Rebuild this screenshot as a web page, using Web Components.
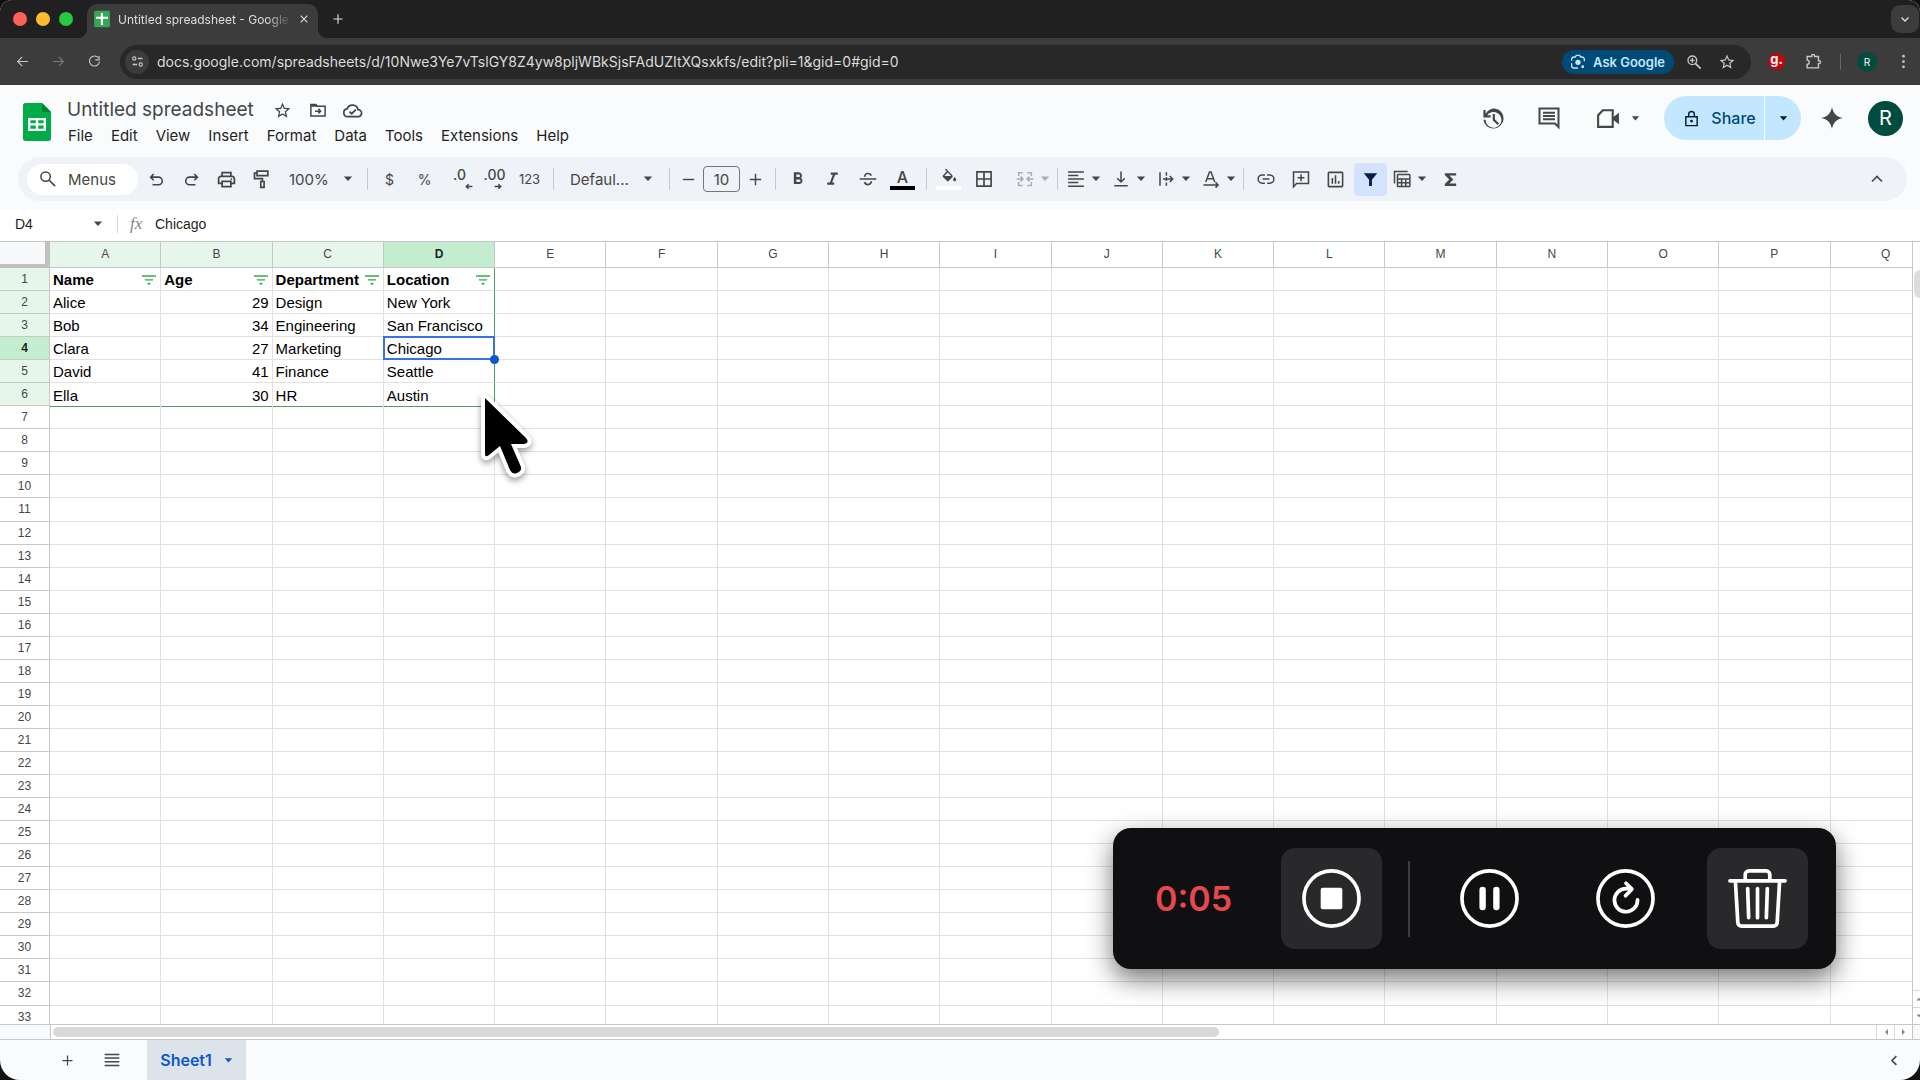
<!DOCTYPE html>
<html lang="en">
<head>
<meta charset="utf-8">
<title>Untitled spreadsheet - Google Sheets</title>
<style>
  html, body{height:100%;margin:0;background:#111}
  body{font-family:Inter, Roboto, "Liberation Sans", sans-serif;color:#444746;overflow:hidden}
</style>
</head>
<body>
<browser-window>
  <tab-strip slot="chrome"></tab-strip>
  <address-bar slot="chrome"></address-bar>
  <sheet-header></sheet-header>
  <tool-bar></tool-bar>
  <formula-bar cell="D4" value="Chicago"></formula-bar>
  <sheet-grid></sheet-grid>
  <sheet-footer></sheet-footer>
</browser-window>
<recorder-bar>0:05</recorder-bar>
<mouse-pointer></mouse-pointer>

<script>
  (function() {
    // inner markup of each icon, on a 24x24 box
    const ICONS = {
      sheetTab: '<rect x="1.500" y="1" width="21" height="22" rx="2" fill="#34a853"/><path d="M10.500 4h2.800v5H20v2.600h-6.700V20h-2.800v-8.400H4V9h6.500z" fill="#fff"/>',
      close: '<path d="M4 4l16 16M20 4L4 20" class="s w3"/>',
      plus: '<path d="M12 4v16M4 12h16" class="s w2"/>',
      minus: '<path d="M4 12h16" class="s w2"/>',
      chevronDown: '<path d="M5 9l7 7 7-7" class="s w3"/>',
      chevronUp: '<path d="M6 15l6-6 6 6" class="s w2"/>',
      chevronLeft: '<path d="M15 5l-7 7 7 7" class="s w3"/>',
      back: '<path d="M22 12H3M11.500 3.500L3 12l8.500 8.500" class="s w2"/>',
      forward: '<path d="M2 12h19M12.500 3.500L21 12l-8.500 8.500" class="s w2"/>',
      reload: '<path d="M19.500 5.500A9.300 9.300 0 1 0 21.300 12" class="s w2"/><path d="M21.500 2v8h-8V8h6V2z"/>',
      tune: '<circle cx="6" cy="6.500" r="3" class="s w2"/><circle cx="18" cy="17.500" r="3" class="s w2"/><path d="M12.500 6.500H21M3 17.500h8.500" class="s w3"/>',
      lens: '<path d="M2.500 10V8A3.500 3.500 0 0 1 6 4.500h2L9.500 2h5L16 4.500h2A3.500 3.500 0 0 1 21.500 8v3M2.500 14v3.500A3.500 3.500 0 0 0 6 21h6" class="s w2"/><circle cx="12" cy="12.500" r="4"/><circle cx="19" cy="19" r="2.200"/>',
      zoomIn: '<circle cx="9.500" cy="9.500" r="6.500" class="s w2"/><path d="M14 14l8 8" class="s w3"/><path d="M9.500 6v7M6 9.500h7" class="s w2"/>',
      star: '<path d="M22 9.240l-7.190-.620L12 2 9.190 8.630 2 9.240l5.460 4.730L5.820 21 12 17.270 18.180 21l-1.630-7.030zM12 15.400l-3.760 2.270 1-4.280-3.320-2.880 4.380-.380L12 6.100l1.710 4.040 4.380.380-3.320 2.880 1 4.280z"/>',
      puzzle: '<path d="M3 5h6.500V4a2 2 0 0 1 4 0v1H19v6h1a2 2 0 0 1 0 4h-1v6H3v-5a3 3 0 0 0 0-6z" class="s w2"/>',
      dots: '<circle cx="12" cy="3.500" r="2.200"/><circle cx="12" cy="12" r="2.200"/><circle cx="12" cy="20.500" r="2.200"/>',
      folder: '<path d="M2.500 4.500H9l2 2.500h10.500v13h-19z" class="s w2"/><path d="M8 13.500h7M12.500 10.500l3 3-3 3" class="s w2"/><path d="M2 4h7.500l2.500 3.500H2z"/>',
      cloud: '<path d="M6.500 19a4.500 4.500 0 0 1-.6-8.950 6.500 6.500 0 0 1 12.400.950A4 4 0 0 1 18.500 19z" class="s w2"/><path d="M8.500 13.200l2.600 2.500 4.700-4.700" class="s w2"/>',
      history: '<path d="M13 3a9 9 0 0 0-8 4.900V4.500H3V11h6.500V9H6.400A7 7 0 1 1 5 13H3a9 9 0 1 0 10-10z"/><path d="M13.200 8h-1.900v5.500l4.300 4.200 1.400-1.300-3.800-3.700z"/>',
      comment: '<path d="M2.500 2.500h19V21l-3.500-3.500H2.500z" class="s w2"/><path d="M6 6.800h12M6 10h12M6 13.200h12" class="s w2"/>',
      video: '<path d="M7.500 4H17v16H3V8.800z" class="s w2"/><path d="M17 11l6-4.500v11L17 13z"/>',
      lock: '<path d="M4 9.500h16V22H4z" class="s w2"/><path d="M8 9V6a4 4 0 0 1 8 0v3" class="s w2"/><circle cx="12" cy="15.700" r="2"/>',
      spark: '<path d="M12 0c1.300 7 5 10.700 12 12-7 1.300-10.700 5-12 12-1.300-7-5-10.700-12-12 7-1.300 10.700-5 12-12z"/>',
      search: '<circle cx="8.800" cy="8.800" r="6.300" class="s w2"/><path d="M13.500 13.500l8 8" class="s w2"/>',
      undo: '<path d="M8.500 5L4.500 9l4 4M5 9h9.500a4.800 4.800 0 0 1 0 9.600H7" class="s w2"/>',
      redo: '<path d="M15.500 5l4 4-4 4M19 9H9.500a4.800 4.800 0 0 0 0 9.600H17" class="s w2"/>',
      print: '<path d="M7 8V4h10v4M6 16.500H3V11a2.500 2.500 0 0 1 2.500-2.500h13A2.500 2.500 0 0 1 21 11v5.500h-3M7 14h10v6H7z" class="s w2"/><circle cx="17.500" cy="11.500" r="1"/>',
      paint: '<path d="M6 2.500h13v5.500H6zM6 5H3v6.500h9.500V15M10.500 15h4v7h-4z" class="s w2"/>',
      arrow: '<path d="M2 6l10 11L22 6z"/>',
      arrowLeft: '<path d="M23 18H13M16.500 14l-4 4 4 4" class="s w3"/>',
      bold: '<path d="M15.600 10.800A4 4 0 0 0 13.250 4H7v14h7a3.900 3.900 0 0 0 1.600-7.200zM10 6.500h3a1.500 1.500 0 0 1 0 3h-3zm3.500 9H10v-3h3.500a1.500 1.500 0 0 1 0 3z"/>',
      italic: '<path d="M10 4v2.600h2.400L9 15.400H6V18h8v-2.600h-2.400L15 6.600h3V4z"/>',
      strike: '<path d="M1 11h22v2H1zM6.500 9c0-3.500 2.500-5.500 5.500-5.500 2.600 0 4.600 1.200 5.400 3.500l-2.200.900c-.500-1.400-1.600-2.100-3.200-2.100-1.800 0-3.200 1-3.200 3.200zM17.500 15c0 3.500-2.500 5.500-5.500 5.500-2.800 0-4.900-1.400-5.700-3.900l2.200-.900c.500 1.700 1.700 2.500 3.500 2.500 1.900 0 3.200-1.200 3.200-3.200z"/>',
      bucket: '<path d="M16.500 9.500L8 1 6.600 2.400l2.400 2.400-5 5a1.500 1.500 0 0 0 0 2.100l5.400 5.400a1.500 1.500 0 0 0 2.100 0l5-5a1.500 1.500 0 0 0 0-2.100zM5.800 10.500l4.600-4.500 4.600 4.500zM19.500 12s-2 2.200-2 3.600a2 2 0 0 0 4 0c0-1.400-2-3.600-2-3.600z"/>',
      borders: '<path d="M3.500 3.500h17v17h-17zM12 3.500v17M3.500 12h17" class="s w2"/>',
      merge: '<path d="M9 3.500H3.500V8M3.500 16v4.500H9M15 3.500h5.500V8M20.500 16v4.500H15M1 12h7.500M6 8.800L9.200 12 6 15.200M23 12h-7.500M18 8.800L14.800 12l3.200 3.200" class="s w2"/>',
      align: '<path d="M1.500 1.500h21v2h-21zM1.500 6.200h13.500v2H1.500zM1.500 11h21v2h-21zM1.500 15.800h13.500v2H1.500zM1.500 20.500h21v2h-21z"/>',
      bottom: '<path d="M3 21h18M12 2v14M7 11l5 5 5-5" class="s w2"/>',
      overflow: '<path d="M4 3v18M12.500 3v4.500M12.500 16.500V21M8 12h13M17 8l4 4-4 4M12.500 9.500v5" class="s w2"/>',
      rotate: '<path d="M2 20h19M18 16.500l3.500 3.500-3.500 3.500" class="s w2"/><path d="M5 16l5-13.500h2L17 16M7 11.500h8" class="s w2"/>',
      link: '<path d="M10.500 6.500H7a5.500 5.500 0 0 0 0 11h3.500M13.500 6.500H17a5.500 5.500 0 0 1 0 11h-3.500M7.500 12h9" class="s w2"/>',
      addComment: '<path d="M2 22.500V2.500h20V18H6z" class="s w2"/><path d="M12 5.500v9.500M7.500 10.200h9" class="s w2"/>',
      chart: '<rect x="3" y="3" width="18" height="18" rx="1" class="s w2"/><path d="M8 10v7.500M12 6.500v11M16 14v3.500" class="s w2"/>',
      filter: '<path d="M2.500 3h19L14 12.500V21h-4v-8.500z"/>',
      table: '<path d="M2 18V2h17.500" class="s w2"/><rect x="6" y="6" width="16.500" height="16" rx="1" class="s w2"/><path d="M6 12h16.500M6 17h16.500M11.500 12v10M17 12v10" class="s w2"/>',
      sigma: '<path d="M4 3h16v3.500h-9.500l5.500 5.500-5.500 5.500H20V21H4v-2.800L10.300 12 4 5.800z"/>',
      filterLines: '<path d="M0 4h24v2.400H0zM5 10.500h14v2.400H5zM8.500 17h7L12 21z"/>',
      menu: '<path d="M1 2.500h22v2.200H1zM1 8h22v2.200H1zM1 13.500h22v2.200H1zM1 19h22v2.200H1z"/>',
      tick: '<path d="M8 6l6 6-6 6z"/>',
      stop: '<circle cx="12" cy="12" r="11.200" class="s w1"/><rect x="7.600" y="7.600" width="8.800" height="8.800" rx=".8"/>',
      pause: '<circle cx="12" cy="12" r="11.200" class="s w1"/><path d="M9.200 8.500v7M14.800 8.500v7" class="s w3 r"/>',
      restart: '<circle cx="12" cy="12" r="11.200" class="s w1"/><path d="M14.300 8h-2.100a4.700 4.700 0 1 0 4.700 4.500M12.200 5.800L14.600 8.200 12 10.900" class="s w1 r"/>',
      trash: '<path d="M.8 4.800h22.400M7 4.800V2.300A1.500 1.500 0 0 1 8.500.800h7A1.500 1.500 0 0 1 17 2.300v2.500M3 4.800l1 17a1.500 1.500 0 0 0 1.500 1.400h13a1.500 1.500 0 0 0 1.500-1.400l1-17M8 8l.4 11.800M12 8v11.800M16 8l-.4 11.800" class="s w1 r"/>'
    };

    const BASE = `
      :host, *{box-sizing:border-box}
      button{display:inline-flex;align-items:center;justify-content:center;padding:0;border:0;background:none;color:inherit;font:inherit;cursor:pointer}
      select, input{font:inherit;color:inherit;background:none;border:0;margin:0;padding:0;appearance:none;outline:0}
    `;

    // registers an element whose shadow root holds the given styles and markup
    function define(name, css, markup) {
      customElements.define(name, class extends HTMLElement {
        constructor() {
          super();
          const template = document.createElement('template');
          template.innerHTML = `<style>${BASE}${css}</style>${typeof markup == 'function' ? markup(this) : markup}`;
          this.attachShadow({mode: 'open'}).append(template.content.cloneNode(true));
        }
      });
    }

    const icon = (name, size = 20) => `<ui-icon name="${name}" style="--size:${size}px"></ui-icon>`;
    const btn = (label, name, size, cls = '') => `<button class="${cls}" aria-label="${label}">${icon(name, size)}</button>`;
    const drop = (label, name, cls = '') => `<button class="drop ${cls}" aria-label="${label}">${icon(name, 18)}${icon('arrow', 10)}</button>`;

    define('ui-icon', `
      :host{display:inline-flex;flex:none;width:var(--size);height:var(--size)}
      svg{width:100%;height:100%;fill:currentColor;overflow:visible}
      .s{fill:none;stroke:currentColor}
      .w1{stroke-width:1.5}
      .w2{stroke-width:2}
      .w3{stroke-width:2.6}
      .r{stroke-linecap:round;stroke-linejoin:round}
    `, el => `<svg viewBox="0 0 24 24" aria-hidden="true">${ICONS[el.getAttribute('name')]}</svg>`);

    define('browser-window', `
      :host{display:flex;flex-direction:column;height:100%;overflow:hidden;border-radius:12px 12px 20px 20px;background:#f9fbfd}
      ::slotted(sheet-grid){flex:1;min-height:0}
    `, `<slot name="chrome"></slot><slot></slot>`);

    define('tab-strip', `
      :host{display:flex;align-items:center;height:38px;background:#202020;color:#dedede;font-size:12px}
      .lights{display:flex;gap:9px;padding:0 14px 0 13px}
      .lights button{width:14px;height:14px;border-radius:50%}
      .tab{align-self:flex-end;position:relative;display:flex;align-items:center;gap:7px;width:231px;height:34px;padding:0 9px 4px 6px;background:#3c3c3c;border-radius:10px 10px 0 0}
      .tab::before, .tab::after{content:"";position:absolute;bottom:0;width:9px;height:9px;background:radial-gradient(circle at 0 0, transparent 9px, #3c3c3c 9px)}
      .tab::before{right:100%}
      .tab::after{left:100%;background:radial-gradient(circle at 100% 0, transparent 9px, #3c3c3c 9px)}
      .title{flex:1;overflow:hidden;white-space:nowrap;mask-image:linear-gradient(90deg, #000 85%, transparent)}
      .new{margin-left:13px}
      .list{width:28px;height:28px;margin:0 1px 0 auto;border-radius:9px;background:#3c3c3c}
    `, `
      <div class="lights">
        <button aria-label="Close window" style="background:#ff5f57"></button>
        <button aria-label="Minimize window" style="background:#febc2e"></button>
        <button aria-label="Zoom window" style="background:#28c840"></button>
      </div>
      <div class="tab">${icon('sheetTab', 18)}<span class="title">Untitled spreadsheet - Google Sheets</span>${btn('Close tab', 'close', 10)}</div>
      ${btn('New tab', 'plus', 14, 'new')}
      ${btn('Search tabs', 'chevronDown', 12, 'list')}
    `);

    define('address-bar', `
      :host{display:flex;align-items:center;height:47px;padding:0 9px 0 10px;background:#3c3c3c;color:#c7c7c7}
      .nav{display:flex;gap:12px}
      .nav button{width:24px;height:24px}
      .off{opacity:.45}
      .omni{display:flex;flex:1;align-items:center;height:34px;margin-left:14px;padding:0 8px 0 5px;border-radius:17px;background:#282828}
      .info{width:24px;height:24px;border-radius:50%;background:#3c3c3c}
      input{flex:1;min-width:0;margin-left:8px;font-size:14px;color:#dcdcdc}
      .ask{gap:7px;height:24px;margin-right:3px;padding:0 9px 0 8px;border-radius:12px;background:#004a77;color:#c2e7ff;font-size:13px;font-weight:600}
      .omni .tool{width:33px}
      .ext{display:flex;align-items:center;margin-left:17px}
      .g{width:17px;height:17px;border-radius:50%;background:#c5050c;color:#fff;font-size:13px;font-weight:700;line-height:13px;align-items:flex-start}
      .puzzle{width:20px;margin:0 17px 0 18px}
      .ext i{width:1px;height:16px;background:#666}
      .me{width:20px;height:20px;margin:0 19px 0 16px;border-radius:50%;background:#004d40;color:#fff;font-size:10px}
    `, `
      <div class="nav">${btn('Back', 'back', 13)}${btn('Forward', 'forward', 13, 'off')}${btn('Reload', 'reload', 13)}</div>
      <div class="omni">
        ${btn('Site information', 'tune', 13, 'info')}
        <input aria-label="Address" value="docs.google.com/spreadsheets/d/10Nwe3Ye7vTslGY8Z4yw8pljWBkSjsFAdUZItXQsxkfs/edit?pli=1&amp;gid=0#gid=0">
        <button class="ask">${icon('lens', 16)}Ask Google</button>
        ${btn('Zoom', 'zoomIn', 16, 'tool')}${btn('Bookmark', 'star', 18, 'tool')}
      </div>
      <div class="ext"><button class="g">g.</button>${btn('Extensions', 'puzzle', 17, 'puzzle')}<i></i><button class="me">R</button>${btn('More', 'dots', 15)}</div>
    `);

    define('sheet-header', `
      :host{display:flex;height:72px;padding:0 17px 0 23px;color:#444746}
      .logo{flex:none;width:28px;height:38px;margin-top:18px}
      .names{flex:1;padding:12px 0 0 8px}
      .top{display:flex;align-items:center;height:26px}
      h1{margin:0 17px 0 8px;font:400 19px/26px Inter, Roboto, sans-serif}
      .top button{width:24px;height:24px;margin-right:11px}
      nav{display:flex}
      nav button{height:24px;padding:0 9px;font-size:15px;color:#1f1f1f}
      .right{display:flex;align-items:center;height:44px;margin-top:11px}
      .right .ico{width:35px;height:35px;margin-right:20px}
      .right .meet{gap:11px;margin:0 24px 0 9px}
      .share{display:flex;gap:1px;height:44px;margin-right:17px;color:#001d35}
      .share button{height:44px;background:#c2e7ff}
      .share .main{gap:11px;width:100px;padding-left:11px;border-radius:22px 0 0 22px;font-size:16px;font-weight:500;color:#004a77}
      .share .main ui-icon{color:#001d35}
      .share .more{width:36px;border-radius:0 22px 22px 0}
      .gem{width:27px;margin-right:23px}
      .me{width:35px;height:35px;border-radius:50%;background:#004d40;color:#fff;font-size:20px}
    `, `
      <svg class="logo" viewBox="0 0 28 38" aria-hidden="true">
        <path d="M2.500 0H19l9 9v26.500a2.500 2.500 0 0 1-2.500 2.500h-23A2.500 2.500 0 0 1 0 35.500v-33A2.500 2.500 0 0 1 2.500 0z" fill="#00ac47"/>
        <path d="M19 0l9 9h-9z" fill="#00832d"/>
        <path d="M5 15h18v13H5zm2.400 2.300v3h5.400v-3zm7.800 0v3h5.400v-3zm-7.800 5.300v3.100h5.400v-3.100zm7.800 0v3.100h5.400v-3.100z" fill="#fff" fill-rule="evenodd"/>
      </svg>
      <div class="names">
        <div class="top"><h1>Untitled spreadsheet</h1>${btn('Star', 'star', 19)}${btn('Move', 'folder', 18)}${btn('Saved to Drive', 'cloud', 21)}</div>
        <nav>${['File', 'Edit', 'View', 'Insert', 'Format', 'Data', 'Tools', 'Extensions', 'Help'].map(t => `<button>${t}</button>`).join('')}</nav>
      </div>
      <div class="right">
        ${btn('Version history', 'history', 27, 'ico')}${btn('Comments', 'comment', 24, 'ico')}
        <button class="meet" aria-label="Join a call">${icon('video', 25)}${icon('arrow', 9)}</button>
        <div class="share"><button class="main">${icon('lock', 17)}Share</button>${btn('Share options', 'arrow', 9, 'more')}</div>
        ${btn('Gemini', 'spark', 22, 'gem')}
        <button class="me">R</button>
      </div>
    `);

    define('tool-bar', `
      :host{display:flex;align-items:center;gap:2px;height:44px;margin:0 13px 9px 18px;padding:0 14px 0 9px;border-radius:22px;background:#eff2f7;font-size:15px}
      button{flex:none;width:33px;height:33px;border-radius:4px}
      .menus{justify-content:flex-start;gap:11px;width:111px;height:31px;padding-left:12px;border-radius:16px;background:#fff;font-size:15px}
      i{flex:none;width:1px;height:22px;margin:0 3px 0 5px;background:#c7cacd}
      .pick{display:flex;align-items:center;position:relative;height:33px}
      .pick select{width:100%;height:100%;padding-left:9px}
      .pick ui-icon{position:absolute;right:7px;pointer-events:none}
      .zoom{width:80px}
      .font{width:103px}
      .font select{padding-left:11px}
      .font ui-icon{right:9px}
      .step{width:26px}
      input{width:37px;height:26px;border:1px solid #747775;border-radius:4px;text-align:center}
      .drop{justify-content:flex-end;gap:6px;width:38px}
      .drop.merge{width:48px;opacity:.4}
      .wide{display:flex;gap:7px}
      .num{font-size:14px}
      .small{font-size:13px}
      .dec{flex-direction:column;font-size:14px;font-weight:500;line-height:14px}
      .dec ui-icon{align-self:flex-end;margin-top:-6px;margin-right:3px}
      .dec.up ui-icon{transform:scaleX(-1)}
      .ink{flex-direction:column}
      .ink b{width:25px;height:4px;background:#000}
      .ink span{font-size:16px;font-weight:500;line-height:18px}
      .ink.fill b{background:#fff}
      .on{background:#d3e3fd;color:#041e49}
      .up-end{margin-left:auto}
    `, `
      <button class="menus">${icon('search', 18)}Menus</button>
      ${btn('Undo', 'undo', 19)}${btn('Redo', 'redo', 19)}${btn('Print', 'print', 21)}${btn('Paint format', 'paint', 20)}
      <label class="pick zoom"><select aria-label="Zoom"><option>100%</option></select>${icon('arrow', 10)}</label>
      <i></i>
      <button class="num">$</button><button class="num">%</button>
      <button class="dec" aria-label="Decrease decimal places">.0${icon('arrowLeft', 14)}</button>
      <button class="dec up" aria-label="Increase decimal places">.00${icon('arrowLeft', 14)}</button>
      <button class="small">123</button>
      <i></i>
      <label class="pick font"><select aria-label="Font"><option>Defaul...</option></select>${icon('arrow', 10)}</label>
      <i></i>
      ${btn('Decrease font size', 'minus', 17, 'step')}<input aria-label="Font size" value="10">${btn('Increase font size', 'plus', 17, 'step')}
      <i></i>
      ${btn('Bold', 'bold', 20)}${btn('Italic', 'italic', 21)}${btn('Strikethrough', 'strike', 18)}
      <button class="ink" aria-label="Text color"><span>A</span><b></b></button>
      <i></i>
      <button class="ink fill" aria-label="Fill color">${icon('bucket', 18)}<b></b></button>
      ${btn('Borders', 'borders', 20)}${drop('Merge cells', 'merge', 'merge')}
      <i></i>
      <div class="wide">${drop('Horizontal align', 'align')}${drop('Vertical align', 'bottom')}${drop('Text wrapping', 'overflow')}${drop('Text rotation', 'rotate')}</div>
      <i></i>
      ${btn('Insert link', 'link', 18)}${btn('Insert comment', 'addComment', 18)}${btn('Insert chart', 'chart', 19)}${btn('Filter', 'filter', 17, 'on')}
      <div class="wide">${drop('Table views', 'table')}${btn('Functions', 'sigma', 17)}</div>
      ${btn('Hide menus', 'chevronUp', 20, 'up-end')}
    `);

    define('formula-bar', `
      :host{display:flex;align-items:center;height:31px;padding-bottom:3px;background:#fff;color:#1f1f1f;font:14px "Liberation Sans", Arial, sans-serif}
      .name{display:flex;align-items:center;width:117px;padding:0 14px 0 15px}
      .name input{flex:1;min-width:0}
      .name ui-icon{color:#444746}
      i{width:1px;height:18px;background:#d5d7da}
      em{width:25px;margin-left:12px;font:italic 17px "Liberation Serif", serif;color:#80868b}
      .value{flex:1}
    `, el => `
      <label class="name"><input aria-label="Name box" value="${el.getAttribute('cell')}">${icon('arrow', 10)}</label>
      <i></i><em>fx</em>
      <input class="value" aria-label="Formula" value="${el.getAttribute('value')}">
    `);

    const DATA = [
      ['Name', 'Age', 'Department', 'Location'],
      ['Alice', 29, 'Design', 'New York'],
      ['Bob', 34, 'Engineering', 'San Francisco'],
      ['Clara', 27, 'Marketing', 'Chicago'],
      ['David', 41, 'Finance', 'Seattle'],
      ['Ella', 30, 'HR', 'Austin']
    ];
    const COLS = 'ABCDEFGHIJKLMNOPQ'.split('');

    function gridRows() {
      let html = '';
      for (let r = 0; r < 33; r++) {
        html += `<tr><th scope="row" class="${r == 3 ? 'cur' : r < 6 ? 'in' : ''}">${r + 1}</th>`;
        COLS.forEach((c, i) => {
          let value = DATA[r] && DATA[r][i] !== undefined ? DATA[r][i] : '';
          let cls = [];
          if (r == 0 && i < 4) cls.push('head');
          if (r < 6 && i == 3) cls.push('edge-r');
          if (r == 5 && i < 4) cls.push('edge-b');
          if (typeof value == 'number') cls.push('n');
          if (r == 3 && i == 3) cls.push('sel');
          let body = r == 0 && i < 4 ? `<div>${value}${btn('Filter ' + value, 'filterLines', 14)}</div>` : value;
          html += `<td class="${cls.join(' ')}">${body}</td>`;
        });
        html += '</tr>';
      }
      return html;
    }

    define('sheet-grid', `
      :host{display:grid;grid-template:minmax(0, 1fr) 15px / minmax(0, 1fr) 8px;background:#fff;border-bottom:1px solid #c4c7c5}
      .view{overflow:hidden}
      table{width:calc(100% + 30px);height:calc(100% + 5px);border-collapse:separate;border-spacing:0;table-layout:fixed;font:15px "Liberation Sans", Arial, sans-serif;color:#000}
      th, td{height:23px;padding:2px 3px 0;border:solid #e1e1e1;border-width:0 1px 1px 0;line-height:20px;white-space:nowrap}
      th{padding-top:0;border-color:#c6c8ca;background:#fff;color:#444746;font-size:12px;font-weight:400}
      thead th{height:27px;padding-bottom:2px;border-top:1px solid #c6c8ca}
      th:first-child{width:50px}
      thead th:first-child{background:#f8f9fa;border-right:5px solid #c0c0c0;border-bottom:4px solid #c0c0c0}
      th.in{background:#e6f6ea}
      th.cur{background:#c4edd0;font-weight:700;color:#1f1f1f}
      .n{text-align:right}
      .head{font-weight:700}
      .head div{display:flex;justify-content:space-between;align-items:center}
      .head button{padding-right:1px;color:#34a853}
      .edge-r{border-right-color:#4d9e66}
      .edge-b{border-bottom:0;box-shadow:0 1px #4d9e66}
      .sel{position:relative}
      .sel::before{content:"";position:absolute;inset:-1px;border:2px solid #3871e0}
      .sel::after{content:"";position:absolute;right:-5px;bottom:-5px;width:9px;height:9px;border-radius:50%;background:#0b57d0}
      .v{display:flex;flex-direction:column;border-left:1px solid #c6c8ca;border-top:1px solid #c6c8ca;overflow:hidden}
      .v u{width:12px;height:28px;margin:28px 0 auto 1px;border-radius:6px;background:#dadce0}
      .v button{width:12px;height:17px;border-top:1px solid #d5d7da;color:#80868b}
      .h{display:flex;border-top:1px solid #c6c8ca}
      .h .pad{width:51px;background:#f8f9fa;border-right:1px solid #c6c8ca}
      .h u{width:61%;height:10px;margin:2px auto 0 2px;border-radius:5px;background:#d9d9d9}
      .h button{width:18px;height:14px;border-left:1px solid #d5d7da;color:#80868b}
      .flip{transform:scaleX(-1)}
      .c{border-left:1px solid #c6c8ca;border-top:1px solid #c6c8ca;background:#f8f9fa}
      .up{transform:rotate(180deg)}
    `, `
      <div class="view">
        <table>
          <thead><tr><th></th>${COLS.map((c, i) => `<th scope="col" class="${i == 3 ? 'cur' : i < 3 ? 'in' : ''}">${c}</th>`).join('')}</tr></thead>
          <tbody>${gridRows()}</tbody>
        </table>
      </div>
      <div class="v"><u></u><button aria-label="Scroll up"><ui-icon class="up" name="arrow" style="--size:6px"></ui-icon></button>${btn('Scroll down', 'arrow', 6)}</div>
      <div class="h"><span class="pad"></span><u></u><button aria-label="Scroll left"><ui-icon class="flip" name="tick" style="--size:12px"></ui-icon></button>${btn('Scroll right', 'tick', 12)}</div>
      <div class="c"></div>
    `);

    define('sheet-footer', `
      :host{display:flex;align-items:center;height:40px;padding:0 9px 0 51px}
      button{width:33px;height:33px}
      .all{margin:0 19px 0 11px}
      .sheet{gap:12px;width:99px;height:40px;background:#dde3ea;color:#0b57d0;font-size:16px;font-weight:600}
      .side{margin-left:auto}
    `, `
      ${btn('Add sheet', 'plus', 15)}${btn('All sheets', 'menu', 16, 'all')}
      <button class="sheet">Sheet1${icon('arrow', 9)}</button>
      ${btn('Show side panel', 'chevronLeft', 15, 'side')}
    `);

    define('recorder-bar', `
      :host{position:absolute;right:84px;bottom:111px;display:flex;align-items:center;width:723px;height:141px;padding:0 28px 0 42px;border-radius:18px;background:#101012;color:#fff;box-shadow:0 10px 26px rgba(0,0,0,.55)}
      time{flex:1;font-size:34px;font-weight:600;color:#e5484d}
      button{width:101px;height:101px;border-radius:14px}
      .tile{background:#29292b}
      i{width:2px;height:76px;margin:0 29px 0 26px;background:#3c3c3e}
      .pause{margin-right:35px}
      .restart{margin-right:31px}
    `, `
      <time><slot></slot></time>
      ${btn('Stop', 'stop', 59, 'tile')}
      <i></i>
      ${btn('Pause', 'pause', 59, 'pause')}${btn('Restart', 'restart', 59, 'restart')}
      ${btn('Delete', 'trash', 59, 'tile')}
    `);

    define('mouse-pointer', `
      :host{position:absolute;left:477px;top:388px;pointer-events:none}
      svg{display:block;width:60px;height:96px;overflow:visible;filter:drop-shadow(0 3px 3px rgba(0,0,0,.4))}
    `, `
      <svg viewBox="0 0 60 96" aria-hidden="true">
        <path d="M8 10v56q0 4 4 1l11-9 10 24q3 5 7 3 5-2 4-6L34 56h13q6-1 2-6z" fill="#000" stroke="#fff" stroke-width="8" stroke-linejoin="round" paint-order="stroke"/>
      </svg>
    `);
  })();
</script>
</body>
</html>
